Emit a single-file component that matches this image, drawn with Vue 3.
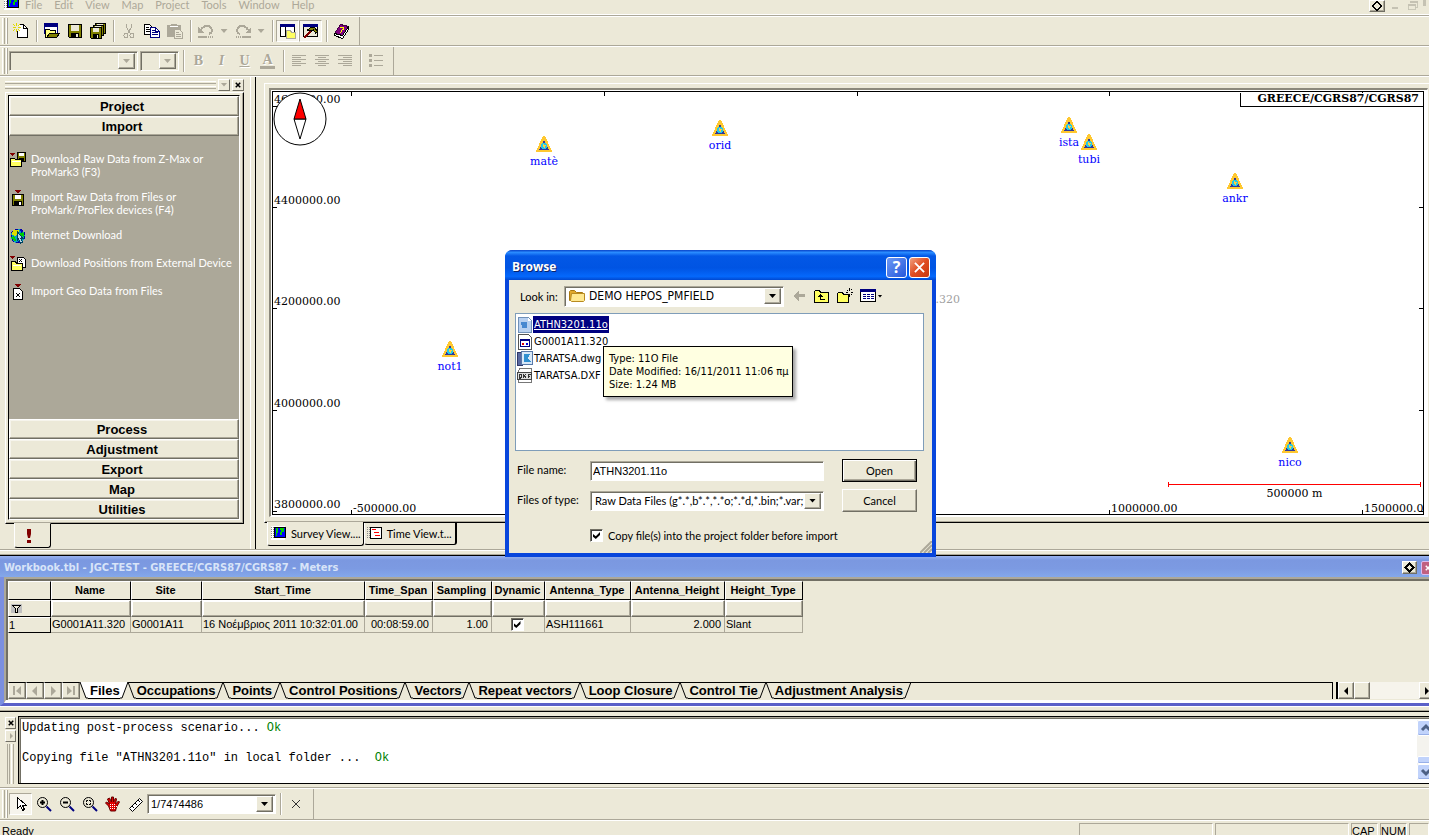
<script setup>
import { ref } from 'vue'

const menus = ['File', 'Edit', 'View', 'Map', 'Project', 'Tools', 'Window', 'Help']

const floppy = '<path fill="#808000" stroke="#000" d="M1.5 1.5h13v13h-12l-1-1z"/><path fill="#ece9d8" d="M4 2h8v6h-8z"/><path fill="#000" d="M4 10h8v5h-8z"/><path fill="#ece9d8" d="M9 11h2v3h-2z"/>'
const lens = '<circle cx="6.5" cy="6.5" r="5" fill="#ece9d8" stroke="#000"/><path stroke="#000080" stroke-width="2" d="M10.5 10.5l4.5 4.5"/>'

const icons = {
  app: '<path fill="#fff" d="M0 0h14v14h-14z"/><path stroke="#888" stroke-dasharray="1 1" d="M.5 1v12M2.5 1v12"/><path fill="#00f" stroke="#000" d="M3.5 1.5h11v10h-11z"/><path fill="#0c0" d="M5 2h2v5h-1v3h-1zM9 2h4v4h-2v3h-2v-3h1z"/>',
  newfile: '<path fill="#fff" stroke="#000" d="M4.5 1.5h6l4 4v9h-10z"/><path fill="none" stroke="#000" d="M10.5 1.5v4h4"/><path stroke="#ece9d8" stroke-width="3" d="M4.5 0v8M0 4.5h7"/><path stroke="#e0d800" d="M0 4.5h3M5 4.5h3M3.5 0v3M3.5 6v3M0 1l2 2M7 1l-2 2M0 8l2-2M7 8l-2-2"/>',
  open: '<path fill="#fff" stroke="#000080" d="M.5 1.5h13v9h-13z"/><path fill="#000080" d="M0 0h14v4h-14z"/><path fill="#ffff80" stroke="#000" d="M1.5 14.5v-8h4l1 1h5v3"/><path fill="#808000" stroke="#000" d="M2.5 14.5l3-4h10l-3 4z"/>',
  save: floppy,
  saveall: '<path fill="#808000" stroke="#000" d="M5.5.5h10v10h-10z"/><path fill="#ece9d8" d="M7 1h6v2h-6z"/><path fill="#808000" stroke="#000" d="M3.5 2.5h10v10h-10z"/><path fill="#ece9d8" d="M5 3h6v2h-6z"/><path fill="#808000" stroke="#000" d="M.5 4.5h11v11h-10l-1-1z"/><path fill="#ece9d8" d="M3 5h6v4h-6z"/><path d="M3 11h6v5h-6z"/><path fill="#ece9d8" d="M7 12h1v3h-1z"/>',
  cut: '<g fill="none" stroke="#aca899"><path d="M5.5 1v3l4 7M10.5 1v3l-4 7"/><circle cx="5" cy="12.5" r="2"/><circle cx="11" cy="12.5" r="2"/></g>',
  copy: '<path fill="#fff" stroke="#000" d="M.5 1.5h5l3 3v7h-8z"/><path stroke="#000" d="M2 4.5h3M2 6.5h5M2 8.5h5"/><path fill="#fff" stroke="#000080" d="M6.5 4.5h5l4 4v6h-9z"/><path fill="none" stroke="#000080" d="M8 7.5h3M8 9.5h6M8 11.5h6M11.5 5v3h4"/>',
  paste: '<path fill="#aca899" d="M0 2h4v-1h6v1h4v12h-14z"/><path stroke="#fff" d="M3 3.5h8"/><path fill="#ece9d8" stroke="#aca899" d="M7.5 6.5h5l3 3v6h-8z"/><path stroke="#aca899" d="M9 9.5h3M9 11.5h5M9 13.5h5"/>',
  undo: '<path fill="none" stroke="#aca899" stroke-width="2" d="M3 7q2-4 6-4t5 4q0 3-3 4"/><path fill="#aca899" d="M0 4v6h6zM0 13h9v2h-9zM10 13h1v2h-1zM12 13h1v2h-1zM14 13h1v2h-1z"/>',
  redo: '<path fill="none" stroke="#aca899" stroke-width="2" d="M13 7q-2-4-6-4t-5 4q0 3 3 4"/><path fill="#aca899" d="M16 4v6h-6zM7 13h9v2h-9zM5 13h1v2h-1zM3 13h1v2h-1zM1 13h1v2h-1z"/>',
  workspace: '<path fill="#fff" stroke="#000" d="M.5 1.5h14v12h-14z"/><path fill="#000080" d="M0 1h15v3h-15z"/><path stroke="#000" d="M5.5 4v10"/><path fill="#ffff60" stroke="#aca899" d="M6.5 15.5v-8h4l1 2h4v6z"/>',
  hammer: '<path fill="#ece9d8" stroke="#000" d="M.5 1.5h14v12h-14z"/><path fill="#000080" d="M0 1h15v3h-15z"/><path stroke="#800000" stroke-width="2" d="M1 15l8-8"/><path fill="#808000" stroke="#000" d="M4.5 7l4-3h3l3 5-2 1-2-3-2 1z"/>',
  book: '<path fill="#800080" stroke="#400040" d="M.5 10.5l6-9 8 2-6 10z"/><path fill="#fff" stroke="#000" d="M.5 10.5v2l8 3 6-9v-3l-6 9z"/><path stroke="#ff0" fill="none" d="M6 4.5h3v2l-2 1v1M6.5 9v1"/>',
  left: '<path stroke="#aca899" d="M1 2.5h14M1 4.5h9M1 6.5h14M1 8.5h9M1 10.5h14M1 12.5h9"/>',
  center: '<path stroke="#aca899" d="M1 2.5h14M4 4.5h8M1 6.5h14M4 8.5h8M1 10.5h14M4 12.5h8"/>',
  right: '<path stroke="#aca899" d="M1 2.5h14M6 4.5h9M1 6.5h14M6 8.5h9M1 10.5h14M6 12.5h9"/>',
  bullets: '<path fill="#aca899" d="M1 1h3v3h-3zM1 6h3v3h-3zM1 11h3v3h-3zM6 2h9v1h-9zM6 7h9v1h-9zM6 12h9v1h-9z"/>',
  dlRaw: '<path fill="#800000" d="M0 1h5v1h-1v1h-1v1h-1v-1h-1v-1h-1z"/><path fill="#808000" stroke="#000" d="M7.5.5h8v9h-8z"/><path fill="#fff" d="M9 1h5v3h-5z"/><path d="M9 6h5v3h-5z"/><path fill="#ffff60" stroke="#000" d="M.5 14.5v-8h4l1 1h6v7z"/><path stroke="#fff" d="M2 9.5h9"/>',
  impRaw: '<path fill="#800000" d="M5 0h6v1h-1v1h-1v1h-2v-1h-1v-1h-1z"/><path fill="#808000" stroke="#000" d="M2.5 4.5h11v11h-11z"/><path fill="#fff" d="M5 5h6v4h-6z"/><path d="M4 11h8v4h-8z"/><path fill="#fff" d="M9 12h2v3h-2z"/>',
  globe: '<circle cx="8" cy="8" r="7" fill="#00a0c0" stroke="#0000a0" stroke-dasharray="3 2"/><path fill="#dd0" d="M3 2h6l-1 4-3 2-3-1z"/><path fill="#0c0" d="M1 9l3-1 2 4-1 2zM11 3l3 3v3l-4-2z"/><path fill="#0000c0" d="M10 1l3 2-2 2zM7 13h4l-2 2z"/><path fill="#b8d8e8" stroke="#004060" d="M7.5 4l5 6h-2l2 4-2 1-2-4-1 1z"/>',
  dlPos: '<path fill="#800000" d="M0 0h5v1h-1v1h-1v1h-1v-1h-1v-1h-1z"/><path fill="#fff" stroke="#000" d="M7.5 1.5h6l2 2v8h-8z"/><path stroke="#000" d="M9 3l3 3M12 3l-3 3"/><path fill="#ffff60" stroke="#000" d="M1.5 14.5v-9h4l1 2h6v7z"/><path stroke="#fff" d="M3 9.5h8"/>',
  impGeo: '<path fill="#800000" d="M5 0h6v1h-1v1h-1v1h-2v-1h-1v-1h-1z"/><path fill="#fff" stroke="#000" d="M3.5 4.5h6l3 3v8h-9z"/><path stroke="#000" d="M6 9l4 4M10 9l-4 4"/>',
  timeview: '<path stroke="#888" stroke-dasharray="1 1" d="M.5 1v12M2.5 1v12"/><path fill="#fff" stroke="#000" d="M3.5 1.5h11v11h-11z"/><path stroke="#f00" d="M5 3.5h4M7 6.5h5M8 9.5h5"/>',
  funnel: '<path fill="#c0c0c0" d="M0 0h11v9h-11z"/><path fill="#ece9d8" stroke="#000" d="M1.5 1.5h8l-3 3v4h-2v-4z"/>',
  pointer: '<path fill="#fff" stroke="#000" d="M4.5 1.5v11l3-3 2 5 2-1-2-4h4z"/>',
  zoomin: lens + '<path stroke="#000" stroke-width="2" d="M4 6.5h5M6.5 4v5"/>',
  zoomout: lens + '<path stroke="#000" stroke-width="2" d="M4 6.5h5"/>',
  zoomfit: lens + '<path fill="none" stroke="#000" d="M4.5 6v-1.5h1.5M7 4.5h1.5v1.5M4.5 7v1.5h1.5M7 8.5h1.5v-1.5"/>',
  hand: '<path fill="#e00000" stroke="#600" d="M3.5 10l-3-3 1-1 3 2-2-5 2-1 2 4v-5h2v5l2-4 1 1-1 5 3-3 1 1-3 5-1 4h-5z"/><path stroke="#fff" stroke-dasharray="1 1" d="M5 8.5h6M5 10.5h7M5 12.5h6"/>',
  ruler: '<path fill="#fff" stroke="#000" d="M1.5 12.5l10-10 3 3-10 10z"/><path stroke="#000" d="M4 10l2 2M7 7l2 2M10 4l2 2"/>',
  folder: '<path fill="#e0a82c" stroke="#a87810" d="M.5 12.5v-9l1-1h4l2 2h6v8z"/><path fill="#ffe890" stroke="#b88a20" d="M2.5 5.5h13v7l-1 1h-12l-1-1z"/>',
  back: '<path fill="#aca899" d="M2 8l6-5v3h6v3h-6v4z"/>',
  up: '<path fill="#ffff60" stroke="#000" d="M.5 14.5v-11l1-1h4l1 2h8v10z"/><path stroke="#000" fill="none" d="M6.5 6v5.5h4M4 8.5h5M5 7.5h3"/>',
  newfolder: '<path fill="#ffff60" stroke="#000" d="M.5 14.5v-9l1-1h4l1 2h5v8z"/><path stroke="#000" d="M9 4.5h2M14 4.5h2M12.5 0v3M12.5 6v3M10 2l1 1M14 6l1 1M15 1l-1 1"/>',
  views: '<path fill="#fff" stroke="#000" d="M.5 1.5h15v12h-15z"/><path fill="#000080" d="M0 1h16v3h-16z"/><path stroke="#000080" stroke-dasharray="3 1" d="M3 6.5h11M3 8.5h11M3 10.5h11"/>',
  fileO: '<path fill="#b8d0f0" stroke="#7090b8" d="M1.5.5h10l3 3v12h-13z"/><path fill="#4888d0" d="M4 5h6v3h-6zM5 8h5v3h-5z"/><path fill="#fff" d="M11 1v3h3z"/>',
  fileG: '<path fill="#fff" stroke="#555" d="M1.5.5h10l3 3v12h-13z"/><path fill="#000080" d="M3 5h10v2h-10z"/><path fill="none" stroke="#000080" d="M3.5 5.5h9v7h-9z"/><path fill="#d00" d="M5 9h2v2h-2z"/><path fill="#00d" d="M9 9h2v2h-2z"/>',
  fileW: '<path fill="#5868a0" stroke="#303868" d="M.5 1.5h5v13h-5z"/><path fill="#d8e8f8" stroke="#5878a8" d="M4.5.5h11v13h-11z"/><path fill="#3090d0" d="M7 3h6l-2 4 3 4h-7z"/>',
  fileX: '<path fill="#fff" stroke="#777" d="M2.5.5h12v14h-13v-11z"/><path fill="#ddd" stroke="#444" d="M.5 4.5h14v7h-14z"/><path stroke="#333" fill="none" d="M2.5 6v4h1l1-1v-2l-1-1zM6 6l3 4M9 6l-3 4M11.5 10v-3.500h2.500M12 8.5h1"/>',
  diamond: '<path fill="none" stroke="#000" stroke-width="2" d="M8 3l5 5-5 5-5-5z"/>',
  restore: '<path fill="none" stroke="#c5c2b3" d="M5.5 5v-2.500h8v7h-3M2.5 6.5h8v6h-8z"/><path fill="#c5c2b3" d="M5 2h9v2h-9zM2 6h9v2h-9z"/>',
}

const tools1 = [
  ['newfile', 'New'], null, ['open', 'Open'], ['save', 'Save'], ['saveall', 'Save all'], null,
  ['cut', 'Cut'], ['copy', 'Copy'], ['paste', 'Paste'], null,
  ['undo', 'Undo', 'menu'], ['redo', 'Redo', 'menu'], null,
  ['workspace', 'Workspace', 'on'], ['hammer', 'Tools', 'on'], null, ['book', 'Help'],
]
const aligns = [['left', 'Align left'], ['center', 'Center'], ['right', 'Align right'], null, ['bullets', 'Bullets']]

const tasks = [
  ['dlRaw', 'Download Raw Data from Z-Max or ProMark3 (F3)'],
  ['impRaw', 'Import Raw Data from Files or ProMark/ProFlex devices (F4)'],
  ['globe', 'Internet Download'],
  ['dlPos', 'Download Positions from External Device'],
  ['impGeo', 'Import Geo Data from Files'],
]
const sections = ['Process', 'Adjustment', 'Export', 'Map', 'Utilities']

const MAP_W = 1150
const MAP_H = 422
const at = (x, y) => ({ left: (x / MAP_W) * 100 + '%', top: (y / MAP_H) * 100 + '%' })
const northings = [
  ['4600000.00', 14], ['4400000.00', 115], ['4200000.00', 216], ['4000000.00', 318], ['3800000.00', 419],
]
const eastings = [['-500000.00', 78], ['', 331], ['', 584], ['1000000.00', 836], ['1500000.00', 1089]]
const stations = [
  ['matè', 271, 52], ['orid', 447, 36], ['ista', 796, 33], ['tubi', 816, 50],
  ['ankr', 962, 89], ['not1', 177, 257], ['nico', 1017, 353],
]

const columns = [
  ['Name', 80, 'G0001A11.320'], ['Site', 71, 'G0001A11'], ['Start_Time', 163, '16 Νοέμβριος 2011 10:32:01.00'],
  ['Time_Span', 68, '00:08:59.00', 'num'], ['Sampling', 59, '1.00', 'num'], ['Dynamic', 53, true],
  ['Antenna_Type', 86, 'ASH111661'], ['Antenna_Height', 94, '2.000', 'num'], ['Height_Type', 78, 'Slant'],
]
const sheets = ['Files', 'Occupations', 'Points', 'Control Positions', 'Vectors', 'Repeat vectors', 'Loop Closure', 'Control Tie', 'Adjustment Analysis']
const navs = [
  ['First', 'M3 2h2v9h-2zM11 2v9l-5-4z'], ['Previous', 'M9 2v10l-5-5z'],
  ['Next', 'M5 2v10l5-5z'], ['Last', 'M9 2h2v9h-2zM3 2v9l5-4z'],
]
const files = [['fileO', 'ATHN3201.11o'], ['fileG', 'G0001A11.320'], ['fileW', 'TARATSA.dwg'], ['fileX', 'TARATSA.DXF']]
const zooms = [['zoomin', 'Zoom in'], ['zoomout', 'Zoom out'], ['zoomfit', 'Zoom to fit'], ['hand', 'Pan'], ['ruler', 'Measure']]

const sheet = ref('Files')
const selected = ref('ATHN3201.11o')
const fileName = ref('ATHN3201.11o')
const copyFiles = ref(true)
const dynamic = ref(true)
</script>

<template>
  <div class="app">
    <header class="menubar">
      <svg class="ic" viewBox="0 0 16 16" v-html="icons.app"></svg>
      <nav class="menus">
        <button v-for="m in menus" :key="m">{{ m }}</button>
      </nav>
      <div class="winctl">
        <button class="raised" aria-label="Pin"><svg class="ic" viewBox="0 0 16 16" v-html="icons.diamond"></svg></button>
        <button aria-label="Minimize"><i class="dash"></i></button>
        <button aria-label="Restore"><svg class="ic" viewBox="0 0 16 16" v-html="icons.restore"></svg></button>
        <i class="closestub"></i>
      </div>
    </header>

    <div class="toolrow">
      <i class="grip"></i>
      <template v-for="(t, i) in tools1" :key="i">
        <i v-if="!t" class="sep"></i>
        <template v-else>
          <button class="tb" :class="{ on: t[2] === 'on' }" :aria-label="t[1]">
            <svg class="ic" viewBox="0 0 16 16" v-html="icons[t[0]]"></svg>
          </button>
          <button v-if="t[2] === 'menu'" class="drop" :aria-label="t[1] + ' history'"><i class="tri off"></i></button>
        </template>
      </template>
      <i class="rowend"></i>
    </div>
    <i class="rule"></i>
    <div class="toolrow format">
      <i class="grip"></i>
      <div class="combo dim font"><select aria-label="Font" disabled></select><span class="cbtn"><i class="tri off"></i></span></div>
      <div class="combo dim size"><select aria-label="Font size" disabled></select><span class="cbtn"><i class="tri off"></i></span></div>
      <i class="sep"></i>
      <button class="tb fmt"><b>B</b></button>
      <button class="tb fmt"><em>I</em></button>
      <button class="tb fmt"><u>U</u></button>
      <button class="tb fmt"><span class="fc">A</span></button>
      <i class="sep"></i>
      <template v-for="(a, i) in aligns" :key="i">
        <i v-if="!a" class="sep"></i>
        <button v-else class="tb" :aria-label="a[1]"><svg class="ic" viewBox="0 0 16 16" v-html="icons[a[0]]"></svg></button>
      </template>
      <i class="rowend"></i>
    </div>
    <i class="rule"></i>

    <div class="middle">
      <aside class="side">
        <div class="sidebar-head">
          <i class="lines"></i>
          <button class="mini" aria-label="Collapse"><i class="tri off"></i></button>
          <button class="mini" aria-label="Close"><svg class="x" viewBox="0 0 8 8"><path d="M1 1l6 6M7 1l-6 6" /></svg></button>
        </div>
        <div class="panel">
          <div class="stack">
            <button class="head">Project</button>
            <button class="head">Import</button>
            <ul class="tasks">
              <li v-for="t in tasks" :key="t[1]">
                <svg class="ic" viewBox="0 0 16 16" v-html="icons[t[0]]"></svg>
                <a href="#">{{ t[1] }}</a>
              </li>
            </ul>
            <button v-for="s in sections" :key="s" class="head">{{ s }}</button>
          </div>
        </div>
        <div class="sidetabs"><button class="bang" aria-label="Alerts"><svg viewBox="0 0 6 14"><path fill="#800000" d="M1 0h4v5l-1 4h-2l-1-4zM1 11h4v3h-4z" /></svg></button></div>
      </aside>

      <main class="main">
        <div class="board">
          <div class="frame">
            <div class="map">
              <template v-for="n in northings" :key="n[0]">
                <span class="tick h" :style="at(0, n[1])"></span>
                <span class="tick h" :style="at(1146, n[1])"></span>
                <span class="ylab" :style="at(1, n[1])">{{ n[0] }}</span>
              </template>
              <template v-for="e in eastings" :key="e[1]">
                <span class="tick v" :style="at(e[1], 0)"></span>
                <span class="tick v" :style="at(e[1], 418)"></span>
                <span v-if="e[0]" class="xlab" :style="at(e[1] + 2, 410)">{{ e[0] }}</span>
              </template>
              <svg class="north" viewBox="0 0 54 54">
                <circle cx="27" cy="27" r="26" fill="#fff" stroke="#000" />
                <path fill="#fff" stroke="#000" d="M21 27h12l-6 20z" />
                <path fill="#f00" stroke="#000" d="M21 27h12l-6-20z" />
              </svg>
              <div v-for="s in stations" :key="s[0]" class="station" :style="at(s[1], s[2])">
                <svg viewBox="0 0 16 16">
                  <path fill="#ffc830" d="M7 0h2l7 15v1h-16v-1z" />
                  <path fill="#303898" d="M8 4l5 10h-10z" />
                  <circle cx="8" cy="10" r="3" fill="#20c8e8" />
                  <path fill="#ffd040" d="M7 8h1v1h2v1h-1v2h-1v-1h-1z" />
                </svg>
                <span>{{ s[0] }}</span>
              </div>
              <span class="ghost" :style="at(687, 207)">G0001A11.320</span>
              <span class="datum">GREECE/CGRS87/CGRS87</span>
              <div class="scale"><i></i>500000 m</div>
            </div>
          </div>
        </div>
        <div class="viewtabs">
          <button class="cur"><svg class="ic" viewBox="0 0 16 16" v-html="icons.app"></svg>Survey View....</button>
          <button><svg class="ic" viewBox="0 0 16 16" v-html="icons.timeview"></svg>Time View.t...</button>
        </div>
      </main>
    </div>
    <i class="rule"></i>
    <i class="shelf"></i>

    <section class="workbook">
      <div class="wtitle">
        <h2>Workbook.tbl - JGC-TEST - GREECE/CGRS87/CGRS87 - Meters</h2>
        <button class="raised wpin" aria-label="Pin workbook"><svg class="ic" viewBox="0 0 16 16" v-html="icons.diamond"></svg></button>
        <button class="wclose" aria-label="Close workbook"><svg class="x" viewBox="0 0 8 8"><path d="M1 1l6 6M7 1l-6 6" /></svg></button>
      </div>
      <div class="wframe">
        <table>
          <colgroup>
            <col class="rowhead" />
            <col v-for="c in columns" :key="c[0]" :style="{ width: c[1] + 'px' }" />
          </colgroup>
          <thead>
            <tr><th></th><th v-for="c in columns" :key="c[0]">{{ c[0] }}</th></tr>
          </thead>
          <tbody>
            <tr class="filter">
              <th><svg class="fun" viewBox="0 0 11 9" v-html="icons.funnel"></svg></th>
              <td v-for="c in columns" :key="c[0]"></td>
            </tr>
            <tr>
              <th>1</th>
              <td v-for="c in columns" :key="c[0]" :class="c[3]">
                <input v-if="c[2] === true" v-model="dynamic" class="check" type="checkbox" aria-label="Dynamic" />
                <template v-else>{{ c[2] }}</template>
              </td>
            </tr>
          </tbody>
        </table>
        <div class="sheets">
          <button v-for="n in navs" :key="n[0]" class="nav" :aria-label="n[0]"><svg viewBox="0 0 14 14"><path :d="n[1]" /></svg></button>
          <div class="strip">
            <button v-for="s in sheets" :key="s" class="sheet" :class="{ cur: s === sheet }" @click="sheet = s">
              <svg class="edge" viewBox="0 0 8 17"><path d="M0 0L6 16H8V0z" class="bg" /><path d="M0 0L6 16H8" class="ln" /></svg>
              <span>{{ s }}</span>
              <svg class="edge" viewBox="0 0 8 17"><path d="M8 0L2 16H0V0z" class="bg" /><path d="M8 0L2 16H0" class="ln" /></svg>
            </button>
          </div>
          <div class="hscroll">
            <button class="raised" aria-label="Scroll left"><svg viewBox="0 0 14 14"><path d="M9 3v8l-4-4z" /></svg></button>
            <i class="raised"></i>
            <i class="track"></i>
            <button class="raised" aria-label="Scroll right"><svg viewBox="0 0 14 14"><path d="M5 3v8l4-4z" /></svg></button>
          </div>
        </div>
      </div>
    </section>

    <section class="log">
      <div class="logside">
        <button class="mini" aria-label="Close log"><svg class="x" viewBox="0 0 8 8"><path d="M1 1l6 6M7 1l-6 6" /></svg></button>
        <button class="mini" aria-label="Expand log"><svg class="arr" viewBox="0 0 8 8"><path d="M3 1l3 3-3 3z" /></svg></button>
        <i></i>
      </div>
      <div class="logbox">
        <div class="loglines">
          <p>Updating post-process scenario... <span>Ok</span></p>
          <p></p>
          <p>Copying file "ATHN3201.11o" in local folder ...&nbsp; <span>Ok</span></p>
        </div>
        <div class="vscroll">
          <button aria-label="Scroll up"><svg viewBox="0 0 12 12"><path d="M2 8l4-4 4 4" /></svg></button>
          <i class="gap"></i><i class="thumb"></i>
          <button aria-label="Scroll down"><svg viewBox="0 0 12 12"><path d="M2 4l4 4 4-4" /></svg></button>
        </div>
      </div>
    </section>
    <i class="rule"></i>

    <div class="toolrow low">
      <i class="grip"></i>
      <button class="tb on" aria-label="Select"><svg class="ic" viewBox="0 0 16 16" v-html="icons.pointer"></svg></button>
      <button v-for="z in zooms" :key="z[0]" class="tb" :aria-label="z[1]"><svg class="ic smooth" viewBox="0 0 16 16" v-html="icons[z[0]]"></svg></button>
      <div class="combo zoom"><select aria-label="Scale"><option>1/7474486</option></select><span class="cbtn"><i class="tri"></i></span></div>
      <i class="sep"></i>
      <button class="tb" aria-label="Clear"><svg class="thin" viewBox="0 0 8 8"><path d="M0 0l8 8M8 0l-8 8" /></svg></button>
      <i class="rowend"></i>
    </div>
    <i class="rule"></i>
    <footer class="status">
      <span class="ready">Ready</span><i class="pane"></i><i class="pane"></i>
      <span class="pane key">CAP</span><span class="pane key">NUM</span><i class="pane key"></i>
    </footer>

    <form class="dialog" @submit.prevent>
      <div class="dtitle">
        <h1>Browse</h1>
        <button type="button" class="help" aria-label="Help">?</button>
        <button type="button" class="close" aria-label="Close"><svg viewBox="0 0 12 12"><path d="M1 1l10 10M11 1L1 11" /></svg></button>
      </div>
      <div class="dbody">
        <div class="look">
          <label for="lookin">Look in:</label>
          <div class="combo">
            <svg class="ic smooth" viewBox="0 0 16 16" v-html="icons.folder"></svg>
            <select id="lookin" class="tah"><option>DEMO HEPOS_PMFIELD</option></select><span class="cbtn"><i class="tri"></i></span>
          </div>
          <button type="button" class="tb" aria-label="Back"><svg class="ic" viewBox="0 0 16 16" v-html="icons.back"></svg></button>
          <button type="button" class="tb" aria-label="Up one level"><svg class="ic" viewBox="0 0 16 16" v-html="icons.up"></svg></button>
          <button type="button" class="tb" aria-label="New folder"><svg class="ic" viewBox="0 0 16 16" v-html="icons.newfolder"></svg></button>
          <button type="button" class="tb views" aria-label="Views"><svg class="ic" viewBox="0 0 16 16" v-html="icons.views"></svg><i class="tri"></i></button>
        </div>
        <ul class="files">
          <li v-for="f in files" :key="f[1]" :class="{ sel: f[1] === selected }">
            <svg class="ic" viewBox="0 0 16 16" v-html="icons[f[0]]"></svg>
            <button type="button" @click="selected = f[1]">{{ f[1] }}</button>
          </li>
        </ul>
        <div class="fields">
          <label for="fname">File name:</label>
          <input id="fname" v-model="fileName" class="text" type="text" />
          <button type="submit" class="btn default">Open</button>
          <label for="ftype">Files of type:</label>
          <div class="combo"><select id="ftype"><option>Raw Data Files (g*.*,b*.*,*.*o;*.*d,*.bin;*.var;*.dat)</option></select><span class="cbtn"><i class="tri"></i></span></div>
          <button type="button" class="btn">Cancel</button>
        </div>
        <label class="copy"><input v-model="copyFiles" class="check" type="checkbox" />Copy file(s) into the project folder before import</label>
        <svg class="resizer" viewBox="0 0 12 12"><path d="M0 12L12 0M4 12l8-8M8 12l4-4" /></svg>
      </div>
      <div class="tip">Type: 11O File<br />Date Modified: 16/11/2011 11:06 πμ<br />Size: 1.24 MB</div>
    </form>
  </div>
</template>

<style>
body { margin: 0; overflow: hidden; }
</style>

<style scoped>
.app {
  --face: #ece9d8; --sh: #aca899; --dk: #716f64; --ui: Lato, sans-serif;
  position: relative; display: flex; flex-direction: column; height: 100vh; overflow: hidden;
  background: var(--face); color: #000; font: 11px/13px "Liberation Sans", sans-serif;
}
.app *, .app *::before, .app *::after { box-sizing: border-box; }
button, select, input { font: inherit; color: inherit; margin: 0; padding: 0; border: 0; background: none; border-radius: 0; appearance: none; outline: 0; }
button { display: flex; align-items: center; justify-content: center; white-space: nowrap; }
select { opacity: 1; }
h1, h2, p, ul { margin: 0; padding: 0; list-style: none; }
i { display: block; flex: none; }
svg { display: block; flex: none; overflow: visible; }
.ic { width: 16px; height: 16px; shape-rendering: crispEdges; }
.ic.smooth { shape-rendering: auto; }
.raised { border: 1px solid; border-color: #fff var(--dk) var(--dk) #fff; background: var(--face); box-shadow: inset -1px -1px var(--sh); }
.rule { height: 2px; border-top: 1px solid var(--sh); border-bottom: 1px solid #fff; }
.tri { width: 7px; height: 4px; background: #000; clip-path: polygon(0 0, 100% 0, 50% 100%); }
.tri.off { background: var(--sh); }

.menubar { display: flex; height: 17px; padding: 0 0 0 4px; border-bottom: 1px solid #fff; box-shadow: inset 0 -1px var(--sh), inset 0 -2px #fff; color: var(--sh); }
.menubar > .ic { margin-top: -4px; }
.menus { display: flex; flex: 1; padding-left: 5px; gap: 12px; font-family: var(--ui); }
.menus button { height: 9px; }
.winctl { display: flex; height: 12px; width: 60px; }
.winctl button { width: 16px; height: 12px; margin-right: 2px; }
.winctl .ic { width: 14px; height: 14px; }
.dash { width: 6px; height: 2px; margin-top: 4px; background: #c5c2b3; }
.closestub { width: 3px; height: 6px; background: #c5c2b3; }

.toolrow { display: flex; align-items: center; flex: none; height: 28px; padding-left: 2px; }
.toolrow.low { height: 30px; }
.grip { align-self: stretch; width: 6px; margin: 1px 1px 1px 0; border-right: 1px solid var(--sh); border-left: 1px solid #fff; background: linear-gradient(90deg, transparent 0 1px, var(--sh) 1px 2px, transparent 2px 3px, #fff 3px 4px, transparent 4px); }
.tb { width: 23px; height: 22px; flex: none; }
.tb.on { border: 1px solid; border-color: var(--sh) #fff #fff var(--sh); background: #f6f4ec; }
.drop { width: 14px; height: 22px; }
.sep { width: 8px; height: 22px; background: linear-gradient(90deg, transparent 0 4px, var(--sh) 4px 5px, #fff 5px 6px, transparent 6px); }
.rowend { align-self: stretch; width: 7px; border-right: 1px solid var(--sh); }
.combo { display: flex; height: 20px; border: 1px solid; border-color: var(--sh) #fff #fff var(--sh); box-shadow: inset 1px 1px var(--dk); background: #fff; padding: 2px; align-items: center; }
.combo select { flex: 1; min-width: 0; height: 16px; overflow: hidden; white-space: nowrap; padding-left: 1px; }
.cbtn { display: flex; align-items: center; justify-content: center; flex: none; width: 17px; height: 16px; border: 1px solid; border-color: #fff var(--dk) var(--dk) #fff; background: var(--face); box-shadow: inset -1px -1px var(--sh); }
.combo.dim { background: var(--face); }
.combo.font { width: 129px; margin-right: 2px; }
.combo.size { width: 39px; }
.combo.zoom { width: 129px; font-size: 11px; }
.fmt { color: var(--sh); font: 14px/16px "Liberation Serif", serif; text-shadow: 1px 1px #fff; }
.fmt em, .fmt u, .fmt span { font-weight: 700; }
.fc { border-bottom: 3px solid var(--sh); line-height: 12px; padding: 0 2px; }
.thin { width: 8px; height: 8px; stroke: #333; fill: none; }

.middle { display: grid; grid-template-columns: 256px minmax(0, 1fr); flex: 1; min-height: 0; }
.side { display: flex; flex-direction: column; min-height: 0; padding: 0 11px 0 5px; border-right: 1px solid #000; box-shadow: inset -4px 0 var(--face), inset -5px 0 #fff; }
.sidebar-head { display: flex; gap: 2px; align-items: center; height: 15px; }
.lines { flex: 1; height: 8px; border-top: 1px solid #fff; border-bottom: 1px solid var(--sh); background: linear-gradient(transparent 0 1px, var(--sh) 1px 2px, transparent 2px 4px, #fff 4px 5px, transparent 5px); }
.mini { width: 12px; height: 12px; border: 1px solid; border-color: #fff var(--dk) var(--dk) #fff; }
.x { width: 6px; height: 6px; stroke: #000; stroke-width: 2; fill: none; }
.arr { width: 8px; height: 8px; fill: var(--sh); }
.panel { display: flex; flex: 1; min-height: 0; border: 1px solid; border-color: #fff #000 #000 #fff; box-shadow: inset -1px -1px var(--sh); padding: 2px 3px 3px 2px; }
.stack { display: flex; flex-direction: column; flex: 1; border: 1px solid; border-color: #000 #fff #fff #000; background: #aca899; }
.head { flex: none; height: 20px; border: 1px solid; border-color: #fff var(--dk) var(--dk) #fff; box-shadow: inset -1px -1px var(--sh), inset 1px 1px #f6f4ec; background: var(--face); font: bold 13px/16px "Liberation Sans", sans-serif; padding: 2px 4px 0 0; }
.tasks { flex: 1; padding: 16px 4px 0 1px; color: #fff; font-family: var(--ui); }
.tasks li { display: flex; gap: 5px; min-height: 16px; margin-bottom: 12px; }
.tasks a { color: #fff; text-decoration: none; }
.sidetabs { height: 25px; padding-left: 9px; }
.bang { width: 37px; height: 25px; margin-top: -1px; border: 1px solid; border-color: var(--face) #000 #000 #fff; border-radius: 0 0 3px 3px; background: var(--face); padding-right: 8px; }
.bang svg { width: 6px; height: 14px; }

.main { display: flex; flex-direction: column; min-width: 0; padding: 6px 0 0 8px; }
.board { display: flex; flex: 1; min-height: 0; border: solid #fff; border-width: 1px 0 0 1px; border-bottom: 1px solid #000; box-shadow: inset 0 -1px var(--sh); padding: 4px 1px 5px 4px; }
.frame { display: flex; flex: 1; border: solid; border-width: 2px 1px 1px 2px; border-color: #8c897c #fff #fff #8c897c; background: #fff; padding: 1px 3px 1px 1px; }
.map { position: relative; flex: 1; border: 1px solid #000; overflow: hidden; font: 11px/13px "DejaVu Serif", serif; white-space: nowrap; }
.map > span, .station, .north, .scale { position: absolute; }
.tick { background: #000; }
.tick.h { width: 4px; height: 1px; }
.tick.v { width: 1px; height: 4px; }
.ylab { margin-top: -13px; }
.north { left: 0; top: 0; width: 54px; height: 54px; }
.station { width: 40px; margin: -8px 0 0 -20px; color: #00f; text-align: center; }
.station svg { width: 16px; height: 16px; margin: 0 auto 3px; shape-rendering: crispEdges; }
.ghost { color: #a0a0a0; margin: -6px 0 0 -84px; width: 84px; text-align: right; }
.datum { top: 1px; right: 0; border: solid #000; border-width: 0 0 1px 1px; background: #fff; font-size: 11px; line-height: 12px; font-weight: 700; padding: 0 4px 1px 16px; }
.scale { right: 2px; bottom: 14px; width: 253px; text-align: center; }
.scale i { height: 5px; border: solid #f00; border-width: 0 1px; background: linear-gradient(transparent 0 2px, #f00 2px 3px, transparent 3px); }
.viewtabs { display: flex; align-items: flex-start; height: 26px; padding-left: 3px; font-family: var(--ui); font-size: 11px; }
.viewtabs button { gap: 4px; height: 22px; border: solid; border-width: 0 2px 1px 1px; border-color: #000 #000 #000 #fff; border-radius: 0 0 3px 3px; padding: 0 3px 0 2px; background: var(--face); }
.viewtabs .cur { height: 24px; margin-top: -1px; padding: 0 2px 0 3px; border-right-width: 1px; }

.shelf { height: 5px; border-bottom: 1px solid #000; box-shadow: inset 0 -1px var(--sh); }
.workbook { flex: none; margin-right: -6px; border-left: 4px solid #7b8fe0; border-bottom: 3px solid #5a60c8; }
.wtitle { display: flex; align-items: center; height: 21px; margin-left: -4px; padding: 2px 0 0 4px; background: linear-gradient(#9ab4f0, #7b98e0 20%, #7c9ae2 60%, #84a8ea); color: #d8e4f8; }
.wtitle h2 { flex: 1; font: bold 11px/14px "DejaVu Sans Condensed", sans-serif; }
.wpin { width: 15px; height: 13px; color: #000; margin-right: 4px; }
.wpin .ic { width: 13px; height: 13px; }
.wclose { width: 14px; height: 14px; background: #c06080; border: 1px solid #dbe; border-radius: 2px; }
.wclose .x { stroke: #fff; }
.wframe { display: flex; flex-direction: column; height: 126px; border: solid var(--sh); border-width: 2px 0 0 2px; border-bottom: 3px solid #fff; box-shadow: inset 2px 2px var(--dk); padding: 2px 0 1px 2px; background: var(--face); }
table { border-collapse: separate; border-spacing: 0; table-layout: fixed; width: 795px; flex: none; }
.rowhead { width: 43px; }
th { height: 19px; padding: 0 2px 0 0; border: 1px solid; border-color: #fff #000 #000 #fff; font-weight: 700; white-space: nowrap; overflow: hidden; text-align: center; }
td { height: 16px; padding: 0 3px 0 1px; border: solid var(--sh); border-width: 0 1px 1px 0; white-space: nowrap; }
tbody th { height: 16px; text-align: left; font-weight: 400; }
.filter td { height: 17px; border: 1px solid; border-color: #fff var(--dk) var(--dk) #fff; box-shadow: inset -1px -1px var(--sh), inset 1px 1px #fff; }
.filter th { height: 17px; }
.fun { width: 11px; height: 9px; margin-left: 2px; shape-rendering: crispEdges; }
.num { text-align: right; }
.check { position: relative; display: block; flex: none; width: 13px; height: 13px; border: 1px solid; border-color: var(--dk) #fff #fff var(--dk); background: #fff; box-shadow: inset 1px 1px #404040; }
.check:checked::before { content: ""; display: block; width: 7px; height: 7px; margin: 2px; background: #000; clip-path: polygon(0 28%, 40% 62%, 100% 0, 100% 42%, 40% 100%, 0 68%); }
td .check { margin: 0 auto; }
.sheets { display: flex; height: 17px; margin-top: auto; }
.nav { width: 18px; border: 1px solid; border-color: #000 var(--dk) var(--dk) #fff; box-shadow: inset -1px -1px var(--sh); }
.nav svg { width: 14px; height: 14px; fill: var(--sh); }
.strip { display: flex; flex: 1; border-right: 1px solid #000; box-shadow: inset 0 1px #000; min-width: 0; }
.sheet { font: bold 13px/15px "Liberation Sans", sans-serif; height: 17px; align-items: stretch; }
.sheet span { border-bottom: 1px solid #000; border-top: 1px solid #000; padding-left: 1px; }
.edge { width: 8px; height: 17px; }
.sheet .bg { fill: none; }
.sheet .ln { fill: none; stroke: #000; }
.sheet.cur span { background: #fff; border-top-color: #fff; padding-left: 2px; }
.sheet.cur .bg { fill: #fff; }
.hscroll { display: flex; width: 99px; margin-left: 3px; border-left: 2px solid #000; }
.hscroll .raised { width: 16px; }
.hscroll svg { width: 14px; height: 14px; }
.track { flex: 1; background: #f6f4ec; }

.log { display: flex; flex: none; height: 81px; margin: 0 -6px 0 0; padding: 9px 0 3px 5px; border-top: 1px solid #fff; background: linear-gradient(transparent 0 3px, var(--sh) 3px 4px, #000 4px 5px, transparent 5px); }
.logside { display: flex; flex-direction: column; width: 13px; padding-top: 1px; }
.logside .mini { width: 11px; margin-bottom: 1px; }
.logside i { flex: 1; width: 7px; margin: 1px 0 0 2px; border: solid; border-width: 0 1px; border-color: #fff var(--sh); background: linear-gradient(90deg, transparent 0 1px, var(--sh) 1px 2px, transparent 2px 3px, #fff 3px 4px, transparent 4px); }
.logbox { display: flex; flex: 1; border: 1px solid #000; background: #fff; box-shadow: inset 1px 1px var(--sh), inset 2px 2px var(--dk); padding: 3px 0 3px 3px; }
.loglines { flex: 1; font: 12px/15px "Liberation Mono", monospace; padding-top: 1px; }
.loglines p { height: 15px; white-space: nowrap; }
.loglines span { color: #008000; }
.vscroll { display: flex; flex-direction: column; width: 17px; background: #f4f3ee; }
.vscroll button, .thumb { height: 16px; border: 1px solid #fff; border-radius: 2px; background: #c1d3fb; box-shadow: inset 0 -1px #98b0e8; }
.vscroll .gap { flex: 1; }
.vscroll .thumb { height: 8px; }
.vscroll svg { width: 12px; height: 12px; fill: none; stroke: #4d6185; stroke-width: 3; }
.status { display: flex; flex: none; height: 14px; padding-top: 2px; overflow: hidden; line-height: 14px; }
.status .ready { flex: 1; padding-left: 2px; line-height: 16px; }
.pane { width: 134px; height: 20px; margin-right: 2px; border: 1px solid; border-color: var(--sh) #fff #fff var(--sh); }
.pane.key { width: 27px; }
.pane:last-child { width: 20px; margin: 0; }

.dialog { position: absolute; left: 505px; top: 250px; width: 431px; border: solid #0846dc; border-width: 0 4px 4px; border-radius: 8px 8px 0 0; background: var(--face); font-family: var(--ui); }
.dtitle { display: flex; align-items: center; height: 30px; margin: 0 -4px; padding: 4px 6px 0 7px; gap: 2px; border-radius: 7px 7px 0 0; background: linear-gradient(#0842c8, #2a8cff 8%, #0358e6 20%, #0054e3 60%, #0468fc 88%, #0048d0); color: #fff; }
.dtitle h1 { flex: 1; font: bold 12px/16px "Open Sans", sans-serif; text-shadow: 1px 1px #0a246a; }
.dtitle button { width: 21px; height: 21px; border: 1px solid #fff; border-radius: 3px; background: linear-gradient(135deg, #6d98f4, #2458dc); font: bold 16px/18px "Open Sans", sans-serif; }
.dtitle .close { background: linear-gradient(135deg, #f0a080, #e04c20 50%, #c83810); }
.close svg { width: 11px; height: 11px; stroke: #fff; stroke-width: 2; }
.dbody { position: relative; padding: 6px 8px 0 6px; height: 273px; }
.look { display: flex; align-items: center; height: 20px; padding-left: 5px; }
.look label { width: 44px; }
.look .combo { width: 220px; height: 21px; margin-right: 3px; padding-left: 4px; }
.look .combo select { padding-left: 4px; font-size: 12px; }
.look .views { width: 26px; gap: 2px; margin-left: 2px; }
.views .tri { width: 5px; height: 3px; }
.tah, .files, .tip { font-family: "DejaVu Sans Condensed", sans-serif; }
.files { height: 138px; margin-top: 7px; border: 1px solid #7f9db9; background: #fff; padding: 2px 1px 0; }
.files li { display: flex; height: 17px; align-items: center; }
.files button { height: 17px; padding: 0 1px; }
.sel button { background: #000080; color: #fff; text-decoration: underline; }
.fields { display: grid; grid-template-columns: 73px 234px 93px; row-gap: 7px; align-items: center; margin-top: 8px; padding-left: 2px; justify-content: start; }
.fields label { margin-top: -2px; }
.fields .btn { margin-left: 18px; width: 75px; }
.text { height: 20px; border: 1px solid; border-color: var(--sh) #fff #fff var(--sh); box-shadow: inset 1px 1px var(--dk); background: #fff; padding: 0 2px; font-family: "Liberation Sans", sans-serif; }
.fields .combo select { padding-left: 2px; }
.btn { height: 23px; border: 1px solid; border-color: #fff var(--dk) var(--dk) #fff; box-shadow: inset -1px -1px var(--sh); background: var(--face); }
.btn.default { border-color: #000; box-shadow: inset 1px 1px #fff, inset -1px -1px var(--dk), inset -2px -2px var(--sh); }
.copy { display: flex; align-items: center; gap: 5px; margin: 17px 0 0 75px; }
.resizer { position: absolute; right: 0; bottom: 0; width: 12px; height: 12px; overflow: hidden; stroke: var(--sh); stroke-width: 2; }
.tip { position: absolute; left: 94px; top: 96px; border: 1px solid #000; background: #ffffe1; padding: 5px 3px 5px 5px; box-shadow: 3px 3px 3px rgba(0, 0, 0, .35); white-space: nowrap; }
</style>
